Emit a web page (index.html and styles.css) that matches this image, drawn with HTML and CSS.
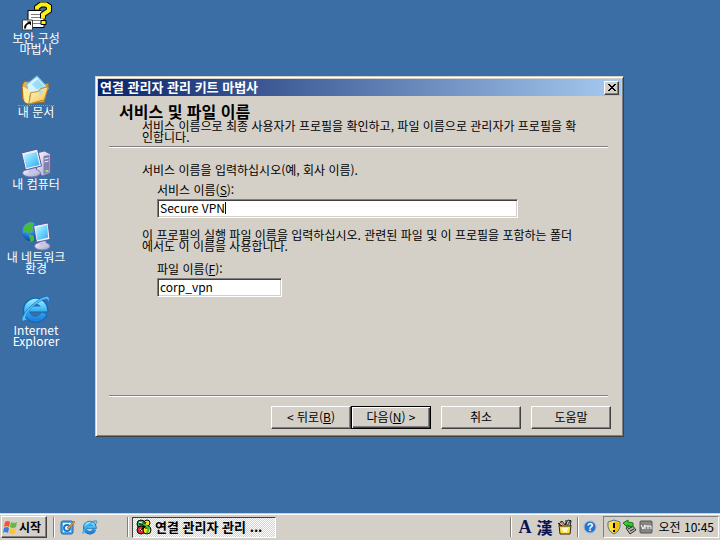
FILE: index.html
```html
<!DOCTYPE html>
<html lang="ko">
<head>
<meta charset="utf-8">
<title>연결 관리자 관리 키트 마법사</title>
<link rel="stylesheet" href="styles.css">
</head>
<body>
<svg class="defs" aria-hidden="true">
  <defs>
    <linearGradient id="screen" x1="0" y1="0" x2="1" y2="1"><stop offset="0" stop-color="#c8faff"/><stop offset=".5" stop-color="#70d4fc"/><stop offset="1" stop-color="#38a4ec"/></linearGradient>
    <linearGradient id="metal" x1="0" y1="0" x2="1" y2="1"><stop offset="0" stop-color="#ffffff"/><stop offset="1" stop-color="#9c9ccc"/></linearGradient>
    <linearGradient id="folder" x1="0" y1="0" x2="1" y2="1"><stop offset="0" stop-color="#fffbd0"/><stop offset="1" stop-color="#f3bf4a"/></linearGradient>
    <linearGradient id="ie" x1="0" y1="0" x2="0" y2="1"><stop offset="0" stop-color="#8ce4ff"/><stop offset=".5" stop-color="#38b4f4"/><stop offset="1" stop-color="#1c84e0"/></linearGradient>
    <radialGradient id="globe" cx=".35" cy=".3" r=".8"><stop offset="0" stop-color="#70c8ff"/><stop offset=".6" stop-color="#1668d0"/><stop offset="1" stop-color="#083888"/></radialGradient>
    <symbol id="explorer" viewBox="1 1 30 30">
      <path d="M24.500 20.500A9.500 9.500 0 1 1 25 16H9" fill="none" stroke="#1264b4" stroke-width="6.500"/>
      <path d="M24 20.500A9 9 0 1 1 24.500 16H9" fill="none" stroke="url(#ie)" stroke-width="5"/>
      <path d="M5 27C0 31 1 23 10 14S28 1 29 5C30 7 28 10 28 10C29 4 24 5 15 12S3 27 8 26" fill="#54c4fa" stroke="#1870bc" stroke-width=".6"/>
    </symbol>
  </defs>
</svg>
<main class="desktop">
  <nav class="shortcuts" aria-label="바탕 화면">
    <a class="shortcut" href="#">
      <svg class="icon" viewBox="0 2 32 29"><path d="M8 10h13l3 3v14H8z" fill="#fff" stroke="#000"/><path d="M11 14h9M11 17h10M11 20h10M11 23h10" stroke="#808080"/><path d="M17 9V7l4-3h5l3 2v4l-6 4v4" fill="none" stroke="#000" stroke-width="6"/><path d="M17 9V7l4-3h5l3 2v4l-6 4v4" fill="none" stroke="#ffef10" stroke-width="4"/><path d="M21 20h5v4h-5z" fill="#ffef10" stroke="#000"/><path d="M2.500 19.500h10v10h-10z" fill="#fff" stroke="#444"/><path d="M5 28c0-4 2-5 5-6" fill="none" stroke="#000" stroke-width="2"/><path d="M7 21h4v4z"/></svg>
      <span>보안 구성<br>마법사</span>
    </a>
    <a class="shortcut documents" href="#">
      <svg class="icon" viewBox="3 1 28 29"><path d="M4 10l2-3 6 1 3 4 14-3-4 18-17 2-4-5z" fill="#e4b44c" stroke="#a86c1c"/><path d="M8 10L18 2l11 12-10 13-9-6z" fill="#d6f2ff" stroke="#7ab4dc"/><path d="M13 10l6-5 6 7-7 3z" fill="#9adcf6"/><path d="M4 12l6 3 1 14-5-2z" fill="#ffeb9c"/><path d="M10 29l2-11 7-1 3-3 7-2-4 13z" fill="url(#folder)" stroke="#c08b2b"/><path d="M19 17l5-2-2 6z" fill="#a8e0ee"/></svg>
      <span>내 문서</span>
    </a>
    <a class="shortcut" href="#">
      <svg class="icon" viewBox="1 1 31 30"><path d="M17 6l8-2 6 3v19l-8 3-6-5z" fill="url(#metal)" stroke="#61619c"/><path d="M24 9l6-1v17l-6 2z" fill="#8080b4"/><path d="M25 12l4-1M25 15l4-1" stroke="#ececff"/><path d="M26 23h3v2h-3z" fill="#8cf044"/><ellipse cx="12" cy="26" rx="9" ry="4" fill="url(#metal)" stroke="#7777aa"/><path d="M9 20h7l1 6h-8z" fill="#c5c5e6"/><path d="M2 6l16-4 4 17-16 4z" fill="#eeeefa" stroke="#56569a"/><path d="M4 8l13-3 3 13-13 3z" fill="url(#screen)"/></svg>
      <span>내 컴퓨터</span>
    </a>
    <a class="shortcut" href="#">
      <svg class="icon" viewBox="0 1 31 31"><circle cx="11" cy="12" r="10" fill="url(#globe)"/><path d="M3 7l6-5 5 1-3 4 2 3-5 4-2-3-4 3zM8 15l5 1 1 5-4 2z" fill="#48bc38"/><ellipse cx="22" cy="27" rx="8" ry="4" fill="url(#metal)" stroke="#7777aa"/><path d="M19 21h6l2 6h-8z" fill="#c5c5e6"/><path d="M13 6l15-3 2 17-14 3z" fill="#eeeefa" stroke="#56569a"/><path d="M15 8l12-3 1 13-11 3z" fill="url(#screen)"/></svg>
      <span>내 네트워크<br>환경</span>
    </a>
    <a class="shortcut" href="#">
      <svg class="icon"><use href="#explorer"/></svg>
      <span>Internet<br>Explorer</span>
    </a>
  </nav>

  <form class="window" aria-labelledby="window-title">
    <header class="titlebar">
      <h1 id="window-title">연결 관리자 관리 키트 마법사</h1>
      <button class="close" type="button" aria-label="닫기"><svg viewBox="0 0 10 8"><path d="M1 0l7 7M2 0l7 7M8 0L1 7M9 0L2 7" stroke="#000" fill="none"/></svg></button>
    </header>
    <div class="body">
      <div class="intro">
        <h2>서비스 및 파일 이름</h2>
        <p>서비스 이름으로 최종 사용자가 프로필을 확인하고, 파일 이름으로 관리자가 프로필을 확<br>인합니다.</p>
      </div>
      <hr>
      <div class="fields">
        <p>서비스 이름을 입력하십시오(예, 회사 이름).</p>
        <div class="field">
          <label for="service">서비스 이름(<u>S</u>):</label>
          <div class="entry current"><input id="service" type="text" value="Secure VPN"></div>
        </div>
        <p class="note">이 프로필의 실행 파일 이름을 입력하십시오. 관련된 파일 및 이 프로필을 포함하는 폴더<br>에서도 이 이름을 사용합니다.</p>
        <div class="field">
          <label for="file">파일 이름(<u>F</u>):</label>
          <div class="entry short"><input id="file" type="text" value="corp_vpn"></div>
        </div>
      </div>
      <hr>
      <footer class="actions">
        <div class="pair">
          <button class="action" type="button">&lt; 뒤로(<u>B</u>)</button>
          <button class="action default" type="submit">다음(<u>N</u>) &gt;</button>
        </div>
        <button class="action" type="button">취소</button>
        <button class="action" type="button">도움말</button>
      </footer>
    </div>
  </form>
</main>

<footer class="taskbar">
  <button class="start" type="button">
    <svg viewBox="0 0 16 16"><path d="M2 3q3-2 5 0L6 8Q4 6 1 8z" fill="#f0582c"/><path d="M8 3q3 2 6 0l-1 5q-3 2-6 0z" fill="#65b843"/><path d="M1 9q3-2 5 0l-1 5q-3-2-5 0z" fill="#387ce0"/><path d="M7 9q3 2 6 0l-1 5q-3 2-6 0z" fill="#f9c62b"/></svg>
    <span>시작</span>
  </button>
  <nav class="quick" aria-label="빠른 실행">
    <button type="button" aria-label="바탕 화면 보기"><svg viewBox="0 0 16 16"><rect x="1" y="2" width="12" height="13" rx="2" fill="#4ba9e7" stroke="#2165b2"/><path d="M3 4h8v9H3z" fill="#f4faff"/><circle cx="7" cy="9" r="3" fill="#fff" stroke="#1c77cb" stroke-width="2"/><path d="M7 9l7-7 1 1-6 7z" fill="#e59b40" stroke="#844f2f" stroke-width=".5"/></svg></button>
    <button type="button" aria-label="Internet Explorer"><svg><use href="#explorer"/></svg></button>
  </nav>
  <div class="tasks">
    <button class="task" type="button">
      <svg viewBox="0 0 16 16"><circle cx="5" cy="5" r="4" fill="#20b848" stroke="#000"/><circle cx="11" cy="4" r="3" fill="#ffdf20" stroke="#000"/><circle cx="5" cy="11" r="4" fill="#e42c2c" stroke="#000"/><circle cx="11" cy="11" r="4" fill="#ffdf20" stroke="#000"/><path d="M3 5h3l3 4h4M4 12l3-3 3-6" fill="none" stroke="#000" stroke-width="1"/><path d="M8 5l5 4-2 5" fill="none" stroke="#33c244" stroke-width="2"/><path d="M3 3l3 1M4 10l2 2" stroke="#fff"/></svg>
      <span>연결 관리자 관리 ...</span>
    </button>
  </div>
  <div class="ime">
    <button class="letter" type="button">A</button>
    <button class="hanja" type="button">漢</button>
    <button type="button" aria-label="IME 패드"><svg viewBox="0 0 16 16"><path d="M2 6l1 9h10l1-9z" fill="#ffe04a" stroke="#30240c"/><path d="M2 5l3-3 3 4 3-5 3 1-1 5H3z" fill="#d6cda2" stroke="#222"/><path d="M1 4l4 3M9 1v5M14 1l-4 6" stroke="#111"/><path d="M3 2l4 5" stroke="#dc4028"/><path d="M12 3l-2 4" stroke="#3878c8"/><path d="M5 10h6M6 12h4" stroke="#fffbd0" stroke-width="2"/></svg></button>
  </div>
  <button class="help" type="button" aria-label="도움말"><svg viewBox="0 0 16 16"><circle cx="8" cy="8" r="6" fill="#2873cc" stroke="#9cbce4"/><text x="8" y="12">?</text></svg></button>
  <div class="tray">
    <svg viewBox="0 0 16 16"><path d="M8 1l6 2v5q-1 5-6 7-5-2-6-7V3z" fill="#ffe235" stroke="#4e70a1"/><path d="M8 2l5 2v4q-1 4-5 6z" fill="#f0bd10"/><path d="M8 4v5M8 11v2" stroke="#000" stroke-width="2"/></svg>
    <svg viewBox="0 0 16 16"><path d="M4 9l6-3 4 5-6 4z" fill="#b8b8b0" stroke="#303030"/><path d="M6 10l4-2M8 12l4-2" stroke="#222"/><path d="M1 4l5-3v2l5 1v4L5 6v2z" fill="#32ce32" stroke="#147414"/></svg>
    <svg viewBox="0 0 16 16"><rect x="2" y="2" width="12" height="12" rx="1" fill="#858585" stroke="#555"/><path d="M3 6l2 4 2-4v4M7 7h3v3M10 7h3v3" fill="none" stroke="#fff"/></svg>
    <time datetime="10:45">오전 10:45</time>
  </div>
</footer>
</body>
</html>
```
FILE: styles.css
```css
* { box-sizing: border-box; }

:root {
  --face: #d4d0c8;
  --shadow: #808080;
  --dark: #404040;
  --desktop: #3a6ea5;
}

body {
  margin: 0;
  min-height: 100vh;
  display: flex;
  flex-direction: column;
  background: var(--desktop);
  color: #000;
  font: 12px/12px "Noto Sans CJK KR", "Liberation Sans", sans-serif;
}

h1, h2, p { margin: 0; }

button {
  margin: 0;
  padding: 0;
  border: 0;
  background: none;
  color: inherit;
  font: inherit;
}

.defs { position: absolute; width: 0; height: 0; }

.desktop {
  position: relative;
  flex: 1;
}

.shortcuts {
  display: flex;
  flex-direction: column;
  width: 72px;
  padding-top: 2px;
}

.shortcut {
  display: flex;
  flex-direction: column;
  align-items: center;
  height: 73px;
  color: #fff;
  line-height: 11px;
  text-align: center;
  text-decoration: none;
  white-space: nowrap;
}

.icon { width: 32px; height: 30px; }
.documents span { border-top: 1px dotted #c59160; }

.window {
  position: absolute;
  top: 76px;
  left: 95px;
  right: 96px;
  padding: 1px;
  background: var(--face);
  border: 1px solid;
  border-color: var(--face) var(--dark) var(--dark) var(--face);
  box-shadow: inset 1px 1px #fff, inset -1px -1px var(--shadow);
}

.titlebar {
  display: flex;
  align-items: center;
  justify-content: space-between;
  height: 17px;
  margin: 1px;
  padding: 0 2px;
  background: linear-gradient(to right, #0a246a, #a6caf0);
}

.titlebar h1 {
  color: #fff;
  font-size: 13px;
  line-height: 14px;
  padding-bottom: 2px;
}

.close,
.action,
.start {
  background: var(--face);
  border: 1px solid;
  border-color: #fff var(--dark) var(--dark) #fff;
  box-shadow: inset -1px -1px var(--shadow);
}

.close {
  display: grid;
  place-items: center;
  width: 15px;
  height: 14px;
}

.close svg { width: 10px; height: 8px; }

.body { padding: 5px 11px 6px 12px; }

.intro { padding: 0 10px; }

.intro h2 {
  font-size: 16px;
  line-height: 18px;
}

.intro p {
  padding-left: 23px;
  line-height: 11px;
}

hr {
  height: 2px;
  margin: 4px 3px 0 0;
  border: 0;
  border-top: 1px solid var(--shadow);
  border-bottom: 1px solid #fff;
}

.fields {
  min-height: 243px;
  padding: 16px 32px 0 33px;
}

.fields p { line-height: 11px; }
.fields .note { padding-bottom: 3px; }

.field {
  padding: 8px 0 11px 15px;
}

.field label {
  display: block;
  line-height: 14px;
}

.entry {
  max-width: 361px;
  margin-top: 2px;
  background: #fff;
  border: 1px solid;
  border-color: var(--shadow) #fff #fff var(--shadow);
  box-shadow: inset 1px 1px var(--dark), inset -1px -1px var(--face);
}

.short { max-width: 125px; }

.entry input {
  display: block;
  width: 100%;
  height: 17px;
  padding: 0 2px 2px;
  border: 0;
  outline: 0;
  background: none;
  color: #000;
  font: inherit;
}

.current input {
  background: linear-gradient(#000, #000) 67px 2px / 1px 12px no-repeat;
}

.actions {
  display: flex;
  justify-content: flex-end;
  gap: 10px;
  padding-top: 9px;
}

.pair { display: flex; }

.action {
  width: 80px;
  height: 23px;
  padding-bottom: 2px;
  white-space: nowrap;
}

.default {
  border-color: #000;
  box-shadow: inset 1px 1px #fff, inset -1px -1px var(--dark), inset -2px -2px var(--shadow);
}

.taskbar {
  display: flex;
  align-items: center;
  height: 27px;
  padding: 0 1px;
  background: var(--face);
  border-top: 1px solid var(--face);
  box-shadow: inset 0 1px #fff;
}

.taskbar svg { display: block; width: 16px; height: 16px; }

.start {
  display: flex;
  align-items: center;
  width: 46px;
  height: 22px;
  padding-left: 1px;
  font-weight: 700;
}

.quick,
.tasks,
.ime,
.help {
  display: flex;
  align-items: center;
  height: 20px;
  border-left: 1px solid var(--shadow);
  box-shadow: inset 1px 0 #fff;
}

.quick {
  gap: 6px;
  width: 74px;
  margin-left: 6px;
  padding-left: 6px;
}

.tasks { flex: 1; padding-left: 4px; }

.task {
  display: flex;
  align-items: center;
  gap: 3px;
  width: 144px;
  height: 21px;
  padding-left: 3px;
  border: 1px solid;
  border-color: var(--dark) #fff #fff var(--dark);
  background: repeating-conic-gradient(#fff 0 25%, var(--face) 0 50%) 0 0 / 2px 2px;
  font-size: 13px;
  font-weight: 700;
  white-space: nowrap;
}

.ime {
  gap: 4px;
  width: 67px;
  padding-left: 7px;
  color: #0a1250;
}

.letter {
  width: 14px;
  font: 700 18px/18px "Liberation Serif", serif;
}

.hanja {
  width: 17px;
  font-size: 16px;
  font-weight: 700;
  line-height: 18px;
}

.help { width: 26px; padding-left: 4px; }

.help text {
  fill: #fff;
  font: 700 11px "Liberation Sans", sans-serif;
  text-anchor: middle;
}

.tray {
  display: flex;
  align-items: center;
  width: 116px;
  height: 22px;
  padding-left: 2px;
  border: 1px solid;
  border-color: var(--shadow) #fff #fff var(--shadow);
}

.tray time {
  margin-left: auto;
  padding-right: 4px;
  white-space: nowrap;
}
```
